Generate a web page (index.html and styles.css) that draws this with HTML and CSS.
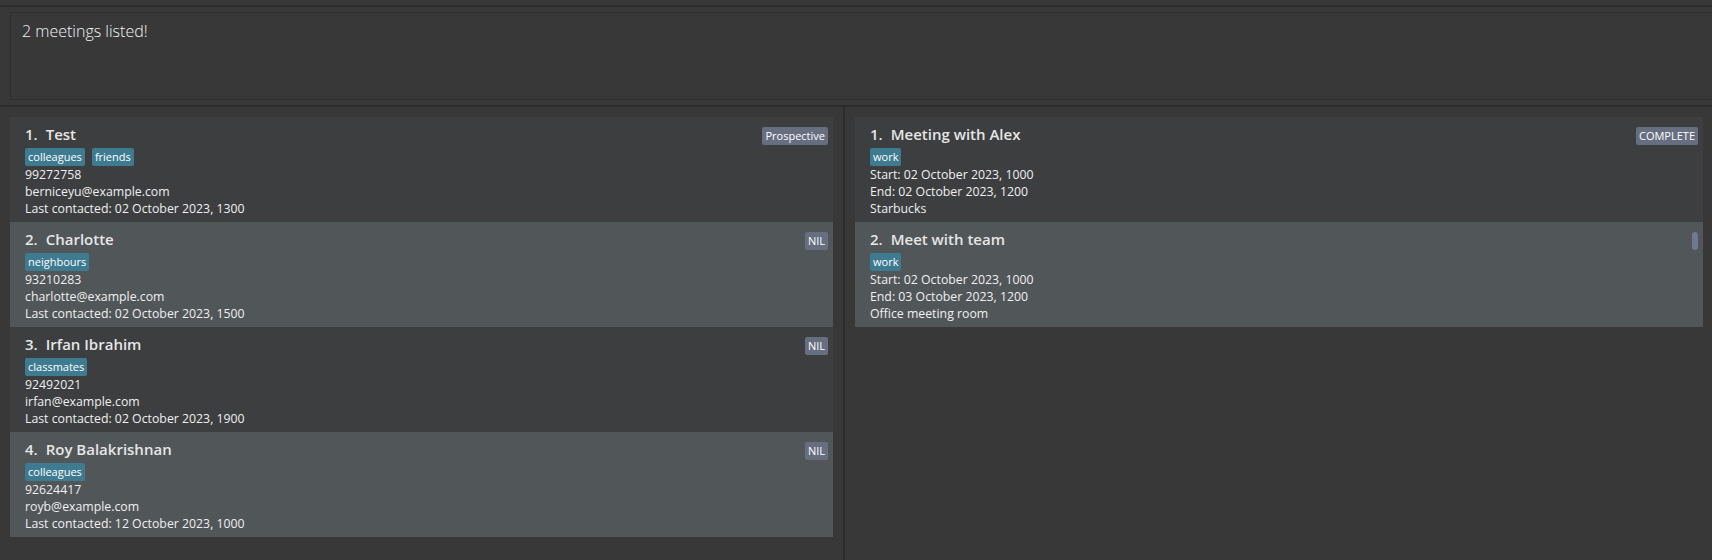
FILE: index.html
```html
<!DOCTYPE html>
<html lang="en">
<head>
<meta charset="utf-8">
<title>Meetings</title>
<link rel="stylesheet" href="styles.css">
</head>
<body>
<div class="app">
  <div class="topbar"></div>
  <div class="result-wrap">
    <div class="result">2 meetings listed!</div>
  </div>
  <div class="split">
    <div class="pane pane-left">
      <ul class="list">
        <li class="card">
          <div class="title"><span class="idx">1.</span>Test</div>
          <div class="tags"><span class="tag">colleagues</span><span class="tag">friends</span></div>
          <div class="line">99272758</div>
          <div class="line">berniceyu@example.com</div>
          <div class="line">Last contacted: 02 October 2023, 1300</div>
          <span class="badge">Prospective</span>
        </li>
        <li class="card alt">
          <div class="title"><span class="idx">2.</span>Charlotte</div>
          <div class="tags"><span class="tag">neighbours</span></div>
          <div class="line">93210283</div>
          <div class="line">charlotte@example.com</div>
          <div class="line">Last contacted: 02 October 2023, 1500</div>
          <span class="badge">NIL</span>
        </li>
        <li class="card">
          <div class="title"><span class="idx">3.</span>Irfan Ibrahim</div>
          <div class="tags"><span class="tag">classmates</span></div>
          <div class="line">92492021</div>
          <div class="line">irfan@example.com</div>
          <div class="line">Last contacted: 02 October 2023, 1900</div>
          <span class="badge">NIL</span>
        </li>
        <li class="card alt">
          <div class="title"><span class="idx">4.</span>Roy Balakrishnan</div>
          <div class="tags"><span class="tag">colleagues</span></div>
          <div class="line">92624417</div>
          <div class="line">royb@example.com</div>
          <div class="line">Last contacted: 12 October 2023, 1000</div>
          <span class="badge">NIL</span>
        </li>
      </ul>
    </div>
    <div class="divider"></div>
    <div class="pane pane-right">
      <ul class="list">
        <li class="card">
          <div class="title"><span class="idx">1.</span>Meeting with Alex</div>
          <div class="tags"><span class="tag">work</span></div>
          <div class="line">Start: 02 October 2023, 1000</div>
          <div class="line">End: 02 October 2023, 1200</div>
          <div class="line">Starbucks</div>
          <span class="badge">COMPLETE</span>
        </li>
        <li class="card alt">
          <div class="title"><span class="idx">2.</span>Meet with team</div>
          <div class="tags"><span class="tag">work</span></div>
          <div class="line">Start: 02 October 2023, 1000</div>
          <div class="line">End: 03 October 2023, 1200</div>
          <div class="line">Office meeting room</div>
        </li>
      </ul>
      <div class="thumb"></div>
    </div>
  </div>
</div>
</body>
</html>
```

FILE: styles.css
```css
html, body {
  margin: 0;
  padding: 0;
  background: #383838;
  height: 100%;
  overflow: hidden;
}

.app {
  font-family: "Open Sans", "Noto Sans", sans-serif;
  color: #ffffff;
  height: 560px;
  display: flex;
  flex-direction: column;
}

.topbar {
  height: 5px;
  border-bottom: 2px solid #2c2c2c;
}

.result-wrap {
  padding: 5px 0 5px 10px;
  border-bottom: 2px solid #2c2c2c;
}

.result {
  border: 1px solid #2e2e2e;
  border-right: none;
  padding: 7px 11px;
  box-sizing: border-box;
  height: 88px;
  font-size: 16px;
  font-weight: 300;
  line-height: 22px;
  color: #f4f4f4;
}

.split {
  flex: 1;
  display: flex;
}

.pane {
  position: relative;
  padding-top: 10px;
}

.pane-left {
  width: 823px;
  padding-left: 10px;
  padding-right: 10px;
}

.divider {
  width: 2px;
  background: #2c2c2c;
}

.pane-right {
  flex: 1;
  padding-left: 10px;
  padding-right: 9px;
}

.list {
  list-style: none;
  margin: 0;
  padding: 0;
}

.card {
  position: relative;
  height: 105px;
  box-sizing: border-box;
  padding: 7px 15px 4px;
  background: #3c3e3f;
}

.card.alt {
  background: #515658;
}

.title {
  font-size: 15px;
  font-weight: 600;
  line-height: 21px;
  color: #e6e6e6;
}

.idx {
  margin-right: 8px;
}

.tags {
  display: flex;
  gap: 7px;
  margin-top: 3px;
  height: 18px;
}

.tag {
  background: #3e7b91;
  color: #ffffff;
  font-size: 11px;
  line-height: 16px;
  padding: 1px 3px;
  border-radius: 2px;
}

.line {
  font-size: 12.3px;
  line-height: 17px;
  color: #f0f0f0;
}

.badge {
  position: absolute;
  top: 10px;
  right: 5px;
  height: 18px;
  box-sizing: border-box;
  padding: 1px 3px;
  font-size: 11px;
  line-height: 16px;
  background: #676e80;
  color: #ffffff;
  border-radius: 2px;
}

.thumb {
  position: absolute;
  top: 125px;
  right: 14px;
  width: 6px;
  height: 18px;
  border-radius: 3px;
  background: #6f7891;
}
```
